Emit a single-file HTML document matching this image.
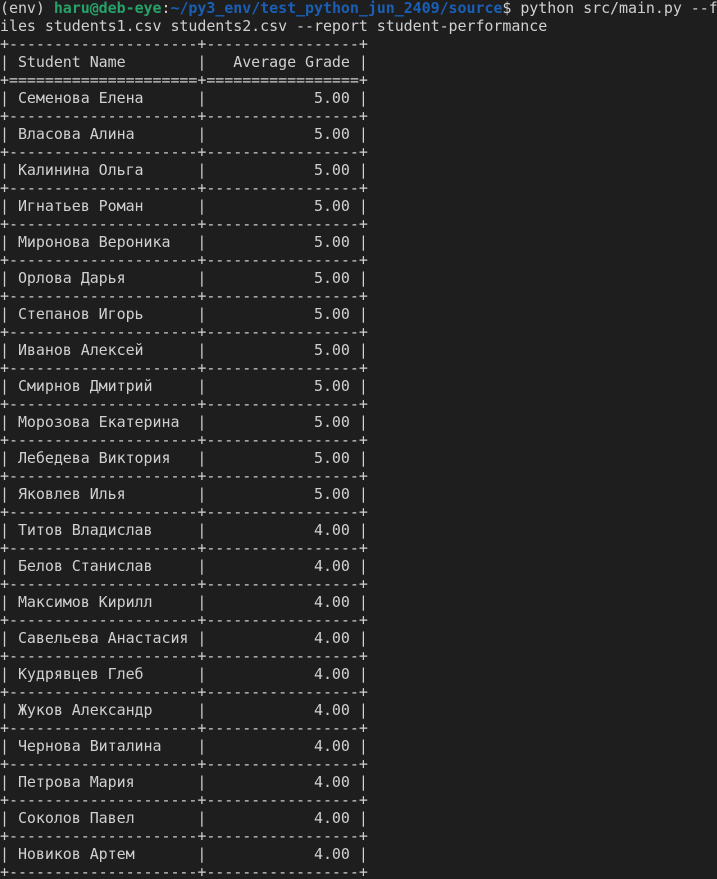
<!DOCTYPE html>
<html><head><meta charset="utf-8"><style>
html,body{margin:0;padding:0;background:#1e1e1e;width:717px;height:879px;overflow:hidden}
pre{margin:-1px 0 0 0;padding:0;font-family:"DejaVu Sans Mono","Liberation Mono",monospace;font-size:15px;letter-spacing:-0.06px;line-height:18px;color:#d0d0d0;white-space:pre}
.g{color:#26a269;font-weight:bold}.b{color:#1a5fb4;font-weight:bold}
</style></head><body><pre>(env) <span class="g">haru@deb-eye</span>:<span class="b">~/py3_env/test_python_jun_2409/source</span>$ python src/main.py --f
iles students1.csv students2.csv --report student-performance
+---------------------+-----------------+
| Student Name        |   Average Grade |
+=====================+=================+
| Семенова Елена      |            5.00 |
+---------------------+-----------------+
| Власова Алина       |            5.00 |
+---------------------+-----------------+
| Калинина Ольга      |            5.00 |
+---------------------+-----------------+
| Игнатьев Роман      |            5.00 |
+---------------------+-----------------+
| Миронова Вероника   |            5.00 |
+---------------------+-----------------+
| Орлова Дарья        |            5.00 |
+---------------------+-----------------+
| Степанов Игорь      |            5.00 |
+---------------------+-----------------+
| Иванов Алексей      |            5.00 |
+---------------------+-----------------+
| Смирнов Дмитрий     |            5.00 |
+---------------------+-----------------+
| Морозова Екатерина  |            5.00 |
+---------------------+-----------------+
| Лебедева Виктория   |            5.00 |
+---------------------+-----------------+
| Яковлев Илья        |            5.00 |
+---------------------+-----------------+
| Титов Владислав     |            4.00 |
+---------------------+-----------------+
| Белов Станислав     |            4.00 |
+---------------------+-----------------+
| Максимов Кирилл     |            4.00 |
+---------------------+-----------------+
| Савельева Анастасия |            4.00 |
+---------------------+-----------------+
| Кудрявцев Глеб      |            4.00 |
+---------------------+-----------------+
| Жуков Александр     |            4.00 |
+---------------------+-----------------+
| Чернова Виталина    |            4.00 |
+---------------------+-----------------+
| Петрова Мария       |            4.00 |
+---------------------+-----------------+
| Соколов Павел       |            4.00 |
+---------------------+-----------------+
| Новиков Артем       |            4.00 |
+---------------------+-----------------+
</pre></body></html>
